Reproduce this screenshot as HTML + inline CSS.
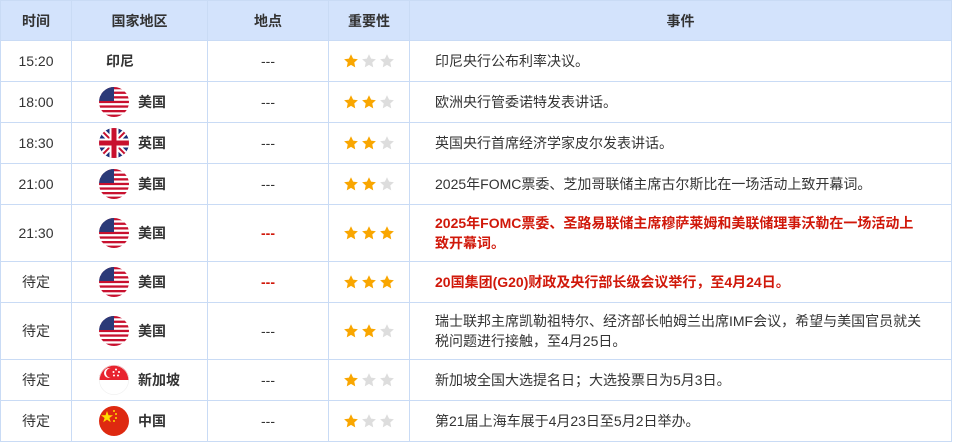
<!DOCTYPE html>
<html><head><meta charset="utf-8"><style>
body{margin:0;background:#fff;font-family:"Liberation Sans","Noto Sans CJK SC",sans-serif;font-size:14px;color:#333}
table{border-collapse:collapse;position:absolute;left:0;top:0;width:952px;table-layout:fixed}
td,th{border:1px solid #c9dbf5;padding:0;text-align:center}
th{background:#d3e3fc;height:39px;font-weight:bold;font-size:14px;color:#333}
td{color:#333}
.c{text-align:left}
.w{display:flex;align-items:center;padding-left:27px}
.f{width:30px;height:30px;margin-right:9px;flex:none}
.e{text-align:left;padding-left:25px;line-height:20px}
.r{color:#d0180a;font-weight:bold}
.s{width:60px;margin:0 auto 0 14px;display:block}
.cn{font-weight:bold}
</style></head><body>
<svg width="0" height="0" style="position:absolute">
<defs>
<symbol id="st" viewBox="0 0 20 20"><path d="M10 1.5l2.6 5.6 6 .7-4.5 4.1 1.2 6L10 14.9 4.7 17.9l1.2-6L1.4 7.8l6-.7z"/></symbol>
<clipPath id="cc"><circle cx="15" cy="15" r="15"/></clipPath>
<symbol id="us" viewBox="0 0 30 30"><g clip-path="url(#cc)"><rect width="30" height="30" fill="#fff"/>
<g fill="#c8102e"><rect y="0" width="30" height="2.3"/><rect y="4.6" width="30" height="2.3"/><rect y="9.2" width="30" height="2.3"/><rect y="13.8" width="30" height="2.3"/><rect y="18.4" width="30" height="2.3"/><rect y="23" width="30" height="2.3"/><rect y="27.6" width="30" height="2.4"/></g>
<rect width="15" height="14" fill="#2b3a78"/></g></symbol>
<symbol id="uk" viewBox="0 0 30 30"><g clip-path="url(#cc)"><rect width="30" height="30" fill="#1b2f7a"/>
<path d="M0 0L30 30M30 0L0 30" stroke="#fff" stroke-width="6"/><path d="M0 0L30 30M30 0L0 30" stroke="#c8102e" stroke-width="2"/>
<path d="M15 0V30M0 15H30" stroke="#fff" stroke-width="9"/><path d="M15 0V30M0 15H30" stroke="#c8102e" stroke-width="5"/></g></symbol>
<symbol id="sg" viewBox="0 0 30 30"><g clip-path="url(#cc)"><rect width="30" height="30" fill="#fff"/><rect width="30" height="15" fill="#e8232e"/>
<circle cx="10" cy="8" r="5" fill="#fff"/><circle cx="12" cy="8" r="5" fill="#e8232e"/>
<g fill="#fff"><circle cx="17" cy="4.5" r="1"/><circle cx="20" cy="7" r="1"/><circle cx="19" cy="10.5" r="1"/><circle cx="15" cy="10.5" r="1"/><circle cx="14.5" cy="7" r="1"/></g></g>
<circle cx="15" cy="15" r="14.6" fill="none" stroke="#eee" stroke-width=".6"/></symbol>
<symbol id="cn" viewBox="0 0 30 30"><g clip-path="url(#cc)"><rect width="30" height="30" fill="#de2910"/>
<g fill="#ffde00"><path d="M8 5l1.5 4.3h4.5l-3.6 2.7 1.4 4.3L8 13.6l-3.8 2.7 1.4-4.3L2 9.3h4.5z"/><circle cx="15" cy="5" r="1"/><circle cx="17" cy="8" r="1"/><circle cx="17" cy="12" r="1"/><circle cx="15" cy="15" r="1"/></g></g></symbol>
</defs></svg>
<table>
<colgroup><col style="width:71px"><col style="width:136px"><col style="width:121px"><col style="width:81px"><col></colgroup>
<tr><th>时间</th><th>国家地区</th><th>地点</th><th>重要性</th><th>事件</th></tr>
<tr style="height:41px"><td>15:20</td><td class="c"><div class="w" style="padding-left:34px"><span class="cn">印尼</span></div></td><td>---</td><td><svg class="s" width="60" height="16"><use href="#st" x="0" width="16" height="16" fill="#f9a600"/><use href="#st" x="18" width="16" height="16" fill="#ddd"/><use href="#st" x="36" width="16" height="16" fill="#ddd"/></svg></td><td class="e">印尼央行公布利率决议。</td></tr>
<tr style="height:41px"><td>18:00</td><td class="c"><div class="w"><svg class="f"><use href="#us"/></svg><span class="cn">美国</span></div></td><td>---</td><td><svg class="s" width="60" height="16"><use href="#st" x="0" width="16" height="16" fill="#f9a600"/><use href="#st" x="18" width="16" height="16" fill="#f9a600"/><use href="#st" x="36" width="16" height="16" fill="#ddd"/></svg></td><td class="e">欧洲央行管委诺特发表讲话。</td></tr>
<tr style="height:41px"><td>18:30</td><td class="c"><div class="w"><svg class="f"><use href="#uk"/></svg><span class="cn">英国</span></div></td><td>---</td><td><svg class="s" width="60" height="16"><use href="#st" x="0" width="16" height="16" fill="#f9a600"/><use href="#st" x="18" width="16" height="16" fill="#f9a600"/><use href="#st" x="36" width="16" height="16" fill="#ddd"/></svg></td><td class="e">英国央行首席经济学家皮尔发表讲话。</td></tr>
<tr style="height:41px"><td>21:00</td><td class="c"><div class="w"><svg class="f"><use href="#us"/></svg><span class="cn">美国</span></div></td><td>---</td><td><svg class="s" width="60" height="16"><use href="#st" x="0" width="16" height="16" fill="#f9a600"/><use href="#st" x="18" width="16" height="16" fill="#f9a600"/><use href="#st" x="36" width="16" height="16" fill="#ddd"/></svg></td><td class="e">2025年FOMC票委、芝加哥联储主席古尔斯比在一场活动上致开幕词。</td></tr>
<tr style="height:57px"><td>21:30</td><td class="c"><div class="w"><svg class="f"><use href="#us"/></svg><span class="cn">美国</span></div></td><td class="r">---</td><td><svg class="s" width="60" height="16"><use href="#st" x="0" width="16" height="16" fill="#f9a600"/><use href="#st" x="18" width="16" height="16" fill="#f9a600"/><use href="#st" x="36" width="16" height="16" fill="#f9a600"/></svg></td><td class="e r">2025年FOMC票委、圣路易联储主席穆萨莱姆和美联储理事沃勒在一场活动上<br>致开幕词。</td></tr>
<tr style="height:41px"><td>待定</td><td class="c"><div class="w"><svg class="f"><use href="#us"/></svg><span class="cn">美国</span></div></td><td class="r">---</td><td><svg class="s" width="60" height="16"><use href="#st" x="0" width="16" height="16" fill="#f9a600"/><use href="#st" x="18" width="16" height="16" fill="#f9a600"/><use href="#st" x="36" width="16" height="16" fill="#f9a600"/></svg></td><td class="e r">20国集团(G20)财政及央行部长级会议举行，至4月24日。</td></tr>
<tr style="height:57px"><td>待定</td><td class="c"><div class="w"><svg class="f"><use href="#us"/></svg><span class="cn">美国</span></div></td><td>---</td><td><svg class="s" width="60" height="16"><use href="#st" x="0" width="16" height="16" fill="#f9a600"/><use href="#st" x="18" width="16" height="16" fill="#f9a600"/><use href="#st" x="36" width="16" height="16" fill="#ddd"/></svg></td><td class="e">瑞士联邦主席凯勒祖特尔、经济部长帕姆兰出席IMF会议，希望与美国官员就关<br>税问题进行接触，至4月25日。</td></tr>
<tr style="height:41px"><td>待定</td><td class="c"><div class="w"><svg class="f"><use href="#sg"/></svg><span class="cn">新加坡</span></div></td><td>---</td><td><svg class="s" width="60" height="16"><use href="#st" x="0" width="16" height="16" fill="#f9a600"/><use href="#st" x="18" width="16" height="16" fill="#ddd"/><use href="#st" x="36" width="16" height="16" fill="#ddd"/></svg></td><td class="e">新加坡全国大选提名日；大选投票日为5月3日。</td></tr>
<tr style="height:41px"><td>待定</td><td class="c"><div class="w"><svg class="f"><use href="#cn"/></svg><span class="cn">中国</span></div></td><td>---</td><td><svg class="s" width="60" height="16"><use href="#st" x="0" width="16" height="16" fill="#f9a600"/><use href="#st" x="18" width="16" height="16" fill="#ddd"/><use href="#st" x="36" width="16" height="16" fill="#ddd"/></svg></td><td class="e">第21届上海车展于4月23日至5月2日举办。</td></tr>
</table>
</body></html>
